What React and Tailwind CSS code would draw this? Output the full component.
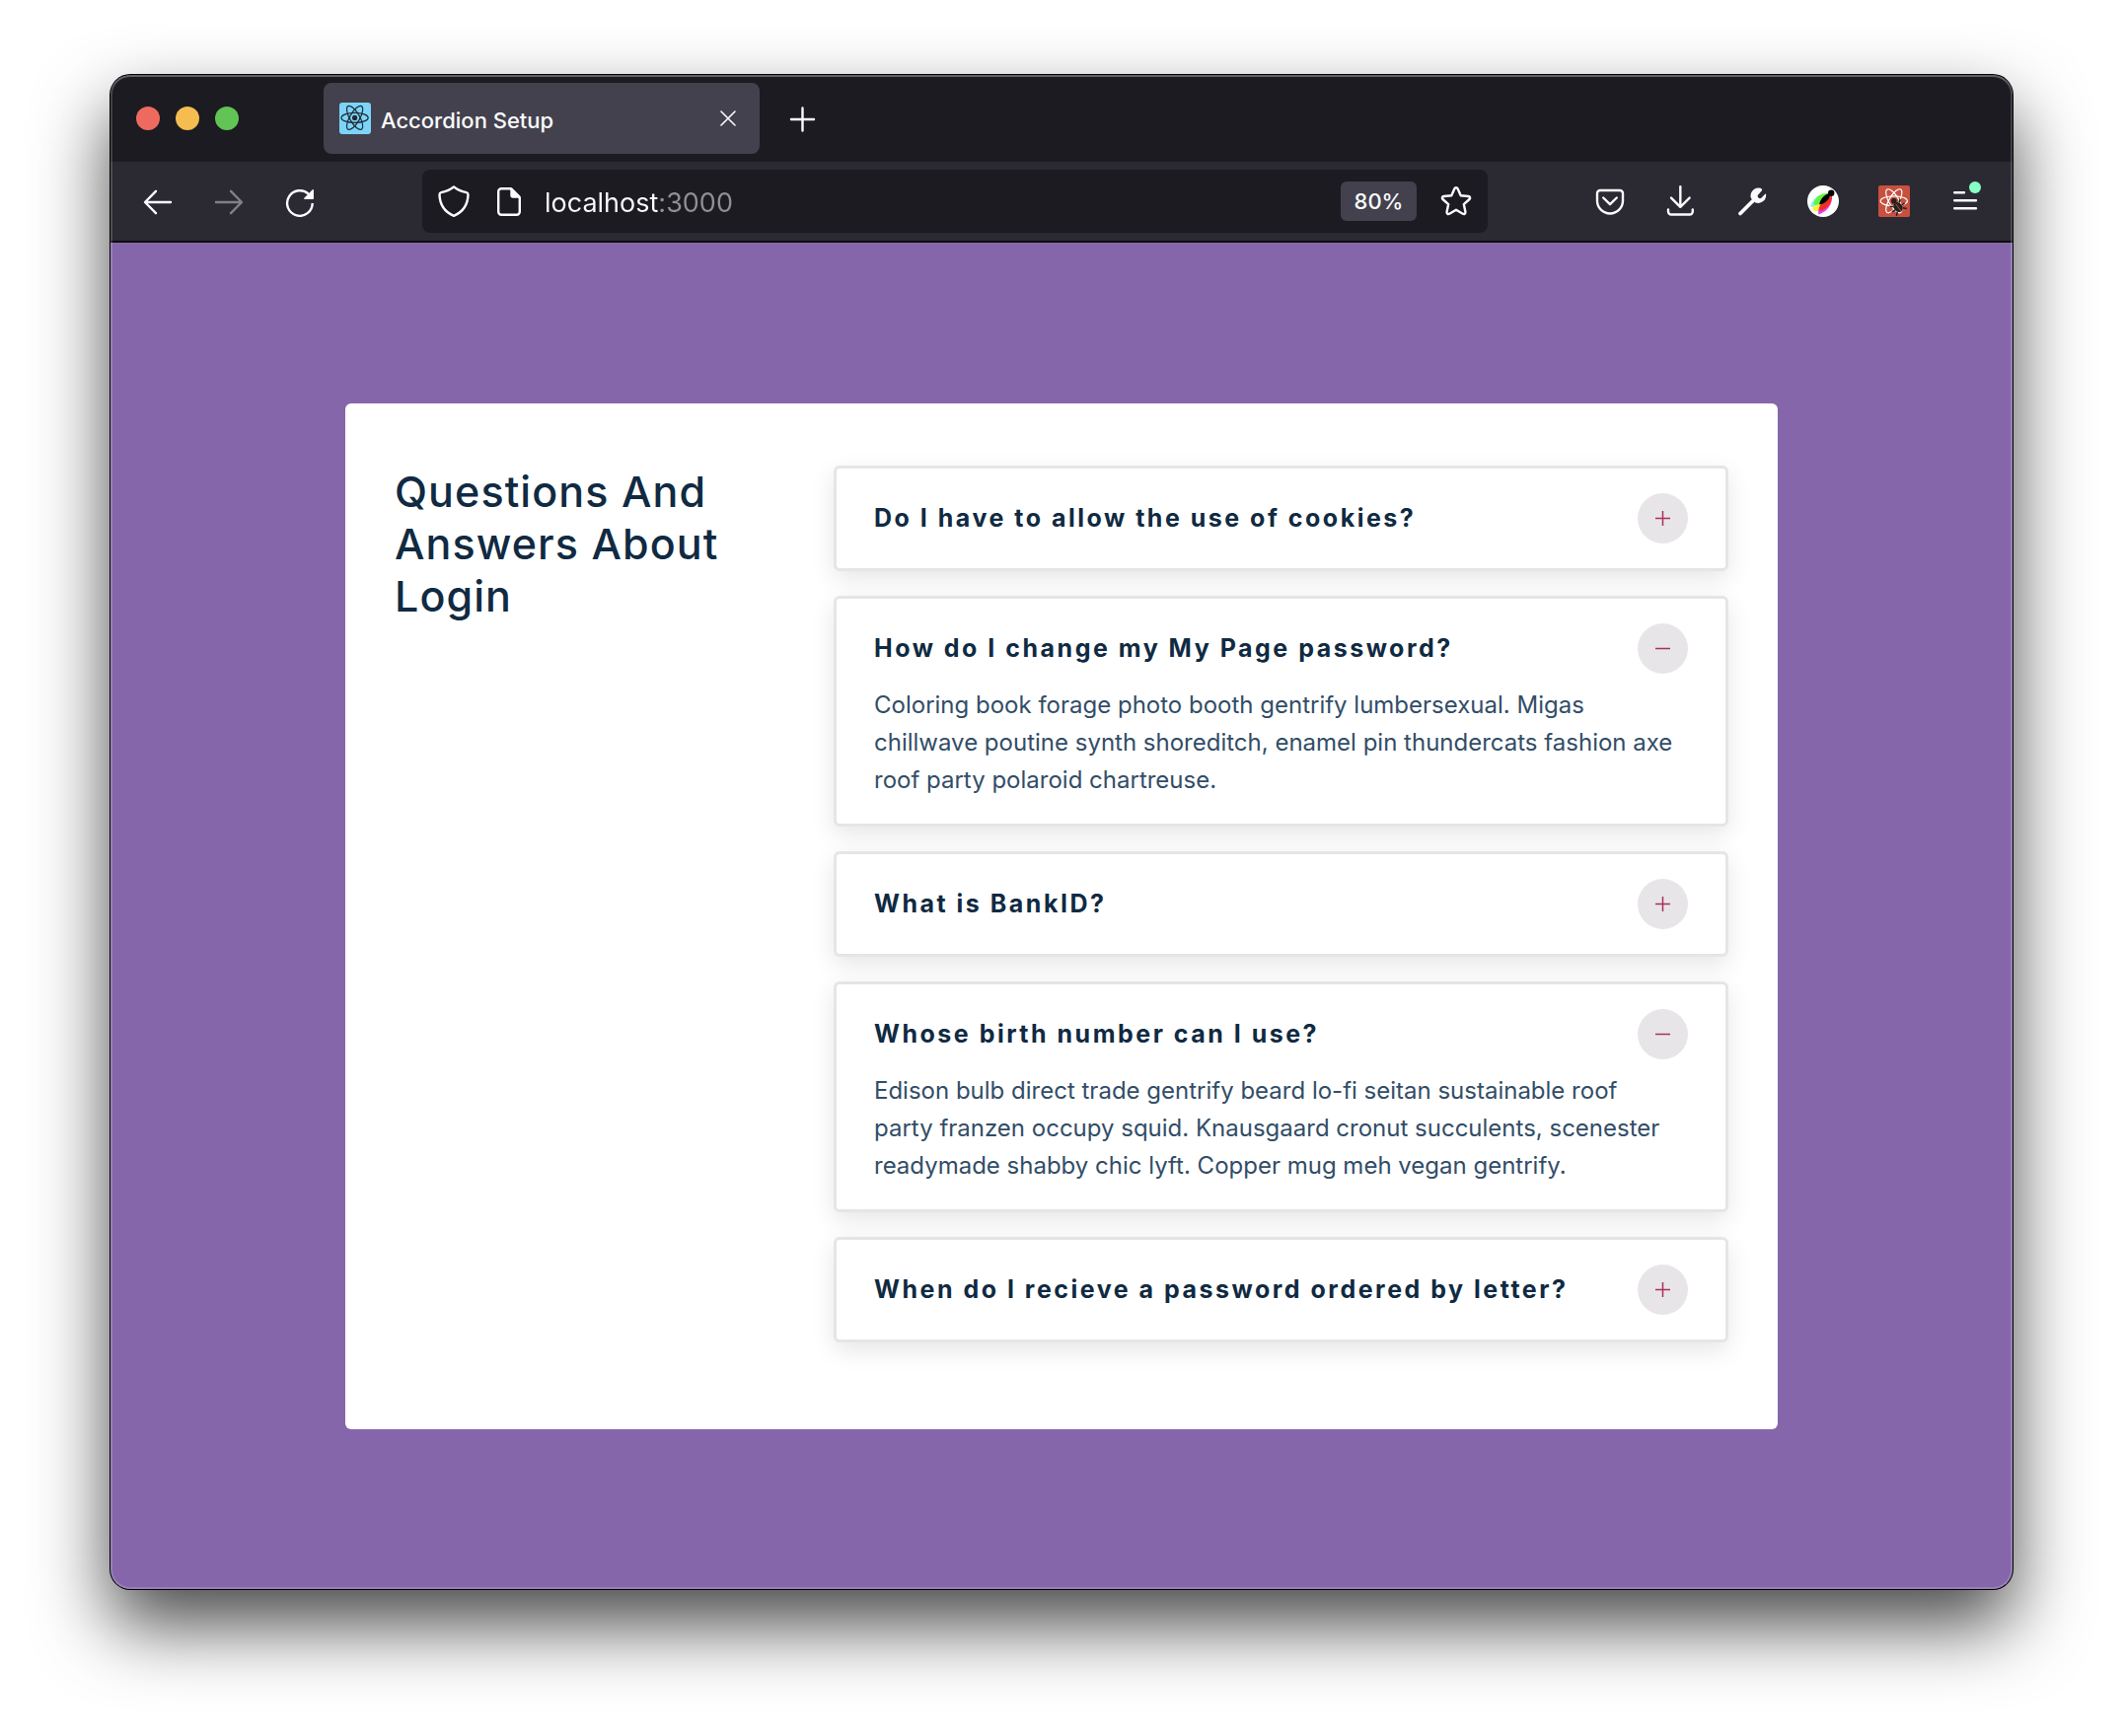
import { useState } from 'react';

const faqs = [
  {
    id: 1,
    title: 'Do I have to allow the use of cookies?',
    info: 'Unicorn vinyl poutine brooklyn, next level direct trade iceland.',
    open: false,
  },
  {
    id: 2,
    title: 'How do I change my My Page password?',
    info: 'Coloring book forage photo booth gentrify lumbersexual. Migas chillwave poutine synth shoreditch, enamel pin thundercats fashion axe roof party polaroid chartreuse.',
    open: true,
  },
  {
    id: 3,
    title: 'What is BankID?',
    info: 'Enamel pin fam sustainable woke whatever venmo.',
    open: false,
  },
  {
    id: 4,
    title: 'Whose birth number can I use?',
    info: 'Edison bulb direct trade gentrify beard lo-fi seitan sustainable roof party franzen occupy squid. Knausgaard cronut succulents, scenester readymade shabby chic lyft. Copper mug meh vegan gentrify.',
    open: true,
  },
  {
    id: 5,
    title: 'When do I recieve a password ordered by letter?',
    info: 'Locavore franzen fashion axe live-edge neutra irony synth af tilde shabby chic man braid chillwave waistcoat copper mug messenger bag.',
    open: false,
  },
];

function Icon({ children, className = 'size-8' }) {
  return (
    <svg
      viewBox="0 0 32 32"
      className={`${className} block shrink-0`}
      fill="none"
      stroke="currentColor"
      strokeWidth="2.4"
      strokeLinecap="round"
      strokeLinejoin="round"
      aria-hidden="true"
    >
      {children}
    </svg>
  );
}

function ToolButton({ label, className = '', children, ...rest }) {
  return (
    <button type="button" aria-label={label} className={`relative shrink-0 ${className}`} {...rest}>
      {children}
    </button>
  );
}

function Orbits({ cx, cy, color }) {
  return (
    <g stroke={color} strokeWidth="1.2" fill="none">
      <ellipse cx={cx} cy={cy} rx="13.6" ry="5" />
      <ellipse cx={cx} cy={cy} rx="13.6" ry="5" transform={`rotate(60 ${cx} ${cy})`} />
      <ellipse cx={cx} cy={cy} rx="13.6" ry="5" transform={`rotate(120 ${cx} ${cy})`} />
    </g>
  );
}

function TabStrip() {
  return (
    <div className="flex h-[88px] items-center bg-[#1c1b22] pl-[26px]">
      <div className="flex gap-4">
        <button type="button" aria-label="Close window" className="size-6 rounded-full bg-[#ee6a5f]" />
        <button type="button" aria-label="Minimize window" className="size-6 rounded-full bg-[#f5bd4f]" />
        <button type="button" aria-label="Zoom window" className="size-6 rounded-full bg-[#61c454]" />
      </div>
      <div className="ml-[86px] flex h-[72px] w-[442px] items-center rounded-lg bg-[#42414d] pr-6 pl-4">
        <svg viewBox="0 0 32 32" className="size-8 shrink-0" aria-hidden="true">
          <rect width="32" height="32" rx="3" fill="#7cd5f9" />
          <Orbits cx={15.6} cy={15.4} color="#1f2a33" />
          <circle cx="15.6" cy="15.4" r="2.6" fill="#1f2a33" />
        </svg>
        <span className="ml-2.5 flex-1 pt-1 text-[22px] leading-7 font-medium whitespace-nowrap text-[#fbfbfe]">
          Accordion Setup
        </span>
        <button type="button" aria-label="Close tab" className="shrink-0">
          <svg viewBox="0 0 16 16" className="size-4" stroke="#fbfbfe" strokeWidth="1.6" strokeLinecap="round" aria-hidden="true">
            <path d="M1 1l14 14M15 1L1 15" />
          </svg>
        </button>
      </div>
      <ToolButton label="New tab" className="ml-7 text-[#fbfbfe]">
        <Icon>
          <path d="M15.500 5.500v23M4 17h23" />
        </Icon>
      </ToolButton>
    </div>
  );
}

function AddressBar() {
  return (
    <div className="mx-[108px] flex h-16 min-w-0 flex-1 items-center rounded-lg bg-[#1c1b22] px-4">
      <ToolButton label="Tracking protection">
        <Icon>
          <path d="M16 1.400C12.500 4.400 7.800 6.200 3.200 7.200c-1.200.3-1.700 1-1.700 2.200C1.800 19 6.500 26.800 16 30.900 25.500 26.800 30.200 19 30.500 9.400c0-1.200-.5-1.900-1.700-2.200C24.200 6.200 19.500 4.400 16 1.400z" />
        </Icon>
      </ToolButton>
      <ToolButton label="Site information" className="ml-6">
        <Icon>
          <path d="M17.500 3.200H8.200a3 3 0 0 0-3 3v20.600a3 3 0 0 0 3 3h15.600a3 3 0 0 0 3-3V12.500z" />
          <path d="M18.500 3.500v6.500a1.500 1.500 0 0 0 1.500 1.500h6.500z" fill="currentColor" />
        </Icon>
      </ToolButton>
      <input
        type="text"
        aria-label="Address"
        defaultValue="localhost:3000"
        className="ml-5 min-w-0 flex-1 bg-[linear-gradient(90deg,#fbfbfe_115px,#8f8f95_115px)] bg-clip-text pt-1 text-[27px] leading-9 text-transparent outline-none"
      />
      <button
        type="button"
        aria-label="Reset zoom level, 80%"
        className="h-10 w-[77px] shrink-0 rounded-md bg-[#42414d] text-[22px] leading-7 font-medium"
      >
        80%
      </button>
      <ToolButton label="Bookmark this page" className="ml-6">
        <Icon>
          <path d="M14.400 3.300c.7-1.500 2.500-1.500 3.200 0l3.100 6.900 7.700.8c1.700.2 2.300 1.900 1.100 3l-5.700 5.100 1.600 7.700c.3 1.700-1.100 2.700-2.600 1.900L16 24.800l-6.800 3.900c-1.500.8-2.900-.2-2.600-1.900l1.600-7.700L2.500 14c-1.200-1.100-.6-2.800 1.100-3l7.700-.8z" />
        </Icon>
      </ToolButton>
    </div>
  );
}

function Toolbar() {
  return (
    <div className="flex h-[82px] items-center border-b-2 border-[#0c0c0d] bg-[#2b2a33] px-8 text-[#fbfbfe]">
      <div className="flex gap-10">
        <ToolButton label="Back">
          <Icon>
            <path d="M29 17H3.500M14 5.800L3 17l11 11.200" />
          </Icon>
        </ToolButton>
        <ToolButton label="Forward" disabled className="text-[#808085]">
          <Icon>
            <path d="M3 17h25.500M18 5.800L29 17 18 28.200" />
          </Icon>
        </ToolButton>
        <ToolButton label="Reload">
          <Icon>
            <path d="M28.700 18A12.800 12.800 0 1 1 25 9" strokeLinecap="butt" />
            <path d="M29.300 4.800v8.500h-8.500z" fill="currentColor" strokeWidth="1.300" />
          </Icon>
        </ToolButton>
      </div>
      <AddressBar />
      <div className="flex gap-10">
        <ToolButton label="Save to Pocket">
          <Icon>
            <path d="M6 5h20a3 3 0 0 1 3 3v7.500a13 13 0 0 1-26 0V8a3 3 0 0 1 3-3z" />
            <path d="M9.200 12.500l6.800 6.700 6.800-6.700" />
          </Icon>
        </ToolButton>
        <ToolButton label="Downloads">
          <Icon>
            <path d="M15.300 1.200V21M6 12.600l9.300 9.200 9.300-9.200M3 24.500v2a3 3 0 0 0 3 3h18.800a3 3 0 0 0 3-3v-2" />
          </Icon>
        </ToolButton>
        <ToolButton label="Developer tools">
          <Icon>
            <path d="M4 28.500L16.500 16" strokeWidth="3.800" />
            <path
              d="M24.400 2.700a8 8 0 0 0-9.600 9.900 8 8 0 0 0 4.800 4.900 8 8 0 0 0 10.500-8.600 .5.500 0 0 0-.9-.2l-3.600 3.700a2.200 2.200 0 0 1-3.200-3.200l3.300-3.700c.9-.9.300-2.600-1.300-2.800z"
              fill="currentColor"
              stroke="none"
            />
          </Icon>
        </ToolButton>
        <ToolButton label="Color picker">
          <svg viewBox="0 0 32 32" className="block size-8" aria-hidden="true">
            <circle cx="16" cy="16" r="16" fill="#fff" />
            <path d="M24 8C13 7 5 13 3 21.500c3.500.6 7 0 9-1.500z" fill="#7df7f0" />
            <path d="M5.500 21.500c-.3 2 .2 3.500 1.500 4.500 2 .6 4 .2 5.500-.5l3-8z" fill="#fff035" />
            <path d="M23 8.200C14 6.500 8 12 6 19c3 1 6.500.6 9-1.500z" fill="#65f23a" />
            <path d="M25 10c.5 9-4 16-13.500 19.500-.8-3-.4-6 1.500-9z" fill="#e93bf0" />
            <path d="M25 10c.5 7-4 13.500-12.500 16.200-.8-2.500-.2-5 1-6.700z" fill="#f0301f" />
            <path d="M12.200 19.500c.6-5.500 5-10.500 11.500-11.700-.4 5.500-5 10.800-11.500 11.700z" fill="#000" />
            <circle cx="24.200" cy="7.800" r="3.200" fill="#000" />
          </svg>
        </ToolButton>
        <ToolButton label="React Developer Tools">
          <svg viewBox="0 0 32 32" className="block size-8" aria-hidden="true">
            <rect width="32" height="32" rx="2" fill="#c8503f" />
            <Orbits cx={15.8} cy={15.8} color="#ffffff" />
            <circle cx="15.800" cy="15.800" r="2.800" fill="#24211f" />
            <g transform="rotate(-35 20 22)">
              <ellipse cx="20" cy="22" rx="4.300" ry="5.400" fill="#24211f" />
              <path
                d="M16.500 19l-3-2.500M15.800 22.500h-3.600M16.500 25.500l-2.800 2.800M23.500 19l3-2.500M24.200 22.500h3.600M23.500 25.500l2.800 2.800"
                stroke="#24211f"
                strokeWidth="1.500"
                fill="none"
              />
              <path d="M20 18v9.500" stroke="#c8503f" strokeWidth=".9" />
            </g>
          </svg>
        </ToolButton>
        <ToolButton label="Open application menu">
          <Icon>
            <path d="M5.200 7.200H15M5.200 15.200h21.800M5.200 23.200h21.800" />
          </Icon>
          <span className="absolute -top-1 right-0 size-3 rounded-full bg-[#87ffc5]" />
        </ToolButton>
      </div>
    </div>
  );
}

function Question({ id, title, info, open }) {
  const [expanded, setExpanded] = useState(open);
  return (
    <article className="rounded-md border-3 border-[#e7e4e8] bg-white px-[38px] py-[25px] shadow-[0_8px_24px_rgba(0,0,0,0.1)]">
      <header className="flex items-center justify-between">
        <h2 className="text-[25px] leading-8 font-bold tracking-widest text-[#102a42]">{title}</h2>
        <button
          type="button"
          aria-label={title}
          aria-expanded={expanded}
          aria-controls={`answer-${id}`}
          onClick={() => setExpanded(!expanded)}
          className="flex size-[51px] shrink-0 items-center justify-center rounded-full bg-[#e8e5e9] text-[#ab3059]"
        >
          <svg viewBox="0 0 15 15" className="size-[15px]" stroke="currentColor" strokeWidth="1.500" aria-hidden="true">
            <path d="M0 7.500h15" />
            {!expanded && <path d="M7.500 0v15" />}
          </svg>
        </button>
      </header>
      {expanded && (
        <p id={`answer-${id}`} className="mt-[13px] pr-3 text-[24px] leading-[38px] text-[#324d67]">
          {info}
        </p>
      )}
    </article>
  );
}

export default function App() {
  return (
    <div className="flex min-h-screen flex-col bg-white px-28 pt-[76px] pb-[149px] font-['Inter','Liberation_Sans',sans-serif] text-white">
      <div className="relative flex flex-1 flex-col overflow-hidden rounded-[20px] bg-[#8566ab] shadow-[0_0_0_1px_#000,0_36px_74px_rgba(0,0,0,0.72)]">
        <TabStrip />
        <Toolbar />
        <main className="flex flex-1 items-center justify-center px-12 py-20">
          <div className="flex w-full max-w-[1452px] items-start gap-[50px] rounded-md bg-white px-[50px] pt-[63px] pb-[88px]">
            <h1 className="w-[395px] shrink-0 text-[43px] leading-[53px] font-medium tracking-wide text-[#102a42]">
              Questions And Answers About Login
            </h1>
            <section className="flex min-w-0 flex-1 flex-col gap-[25px]">
              {faqs.map((faq) => (
                <Question key={faq.id} {...faq} />
              ))}
            </section>
          </div>
        </main>
        <div className="pointer-events-none absolute inset-0 rounded-[20px] shadow-[inset_0_0_0_2px_rgba(255,255,255,0.17),inset_0_2px_0_rgba(255,255,255,0.16)]" />
      </div>
    </div>
  );
}
